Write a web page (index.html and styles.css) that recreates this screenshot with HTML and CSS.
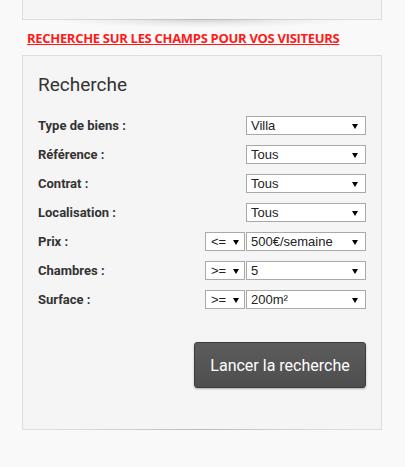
FILE: index.html
```html
<!DOCTYPE html>
<html lang="fr">
<head>
<meta charset="utf-8">
<title>Recherche</title>
<link rel="stylesheet" href="styles.css">
</head>
<body>
<div class="page">
  <div class="box box-top"></div>
  <a class="promo" href="#">RECHERCHE SUR LES CHAMPS POUR VOS VISITEURS</a>
  <form class="box search">
    <h2 class="title">Recherche</h2>
    <div class="row">
      <label class="lbl">Type de biens :</label>
      <div class="ctrls"><span class="sel"><select><option>Villa</option></select></span></div>
    </div>
    <div class="row">
      <label class="lbl">Référence :</label>
      <div class="ctrls"><span class="sel"><select><option>Tous</option></select></span></div>
    </div>
    <div class="row">
      <label class="lbl">Contrat :</label>
      <div class="ctrls"><span class="sel"><select><option>Tous</option></select></span></div>
    </div>
    <div class="row">
      <label class="lbl">Localisation :</label>
      <div class="ctrls"><span class="sel"><select><option>Tous</option></select></span></div>
    </div>
    <div class="row">
      <label class="lbl">Prix :</label>
      <div class="ctrls"><span class="sel sel-op"><select><option>&lt;=</option></select></span><span class="sel"><select><option>500€/semaine</option></select></span></div>
    </div>
    <div class="row">
      <label class="lbl">Chambres :</label>
      <div class="ctrls"><span class="sel sel-op"><select><option>&gt;=</option></select></span><span class="sel"><select><option>5</option></select></span></div>
    </div>
    <div class="row">
      <label class="lbl">Surface :</label>
      <div class="ctrls"><span class="sel sel-op"><select><option>&gt;=</option></select></span><span class="sel"><select><option>200m²</option></select></span></div>
    </div>
    <div class="actions">
      <button type="button" class="btn">Lancer la recherche</button>
    </div>
  </form>
</div>
</body>
</html>
```

FILE: styles.css
```css
html, body {
  margin: 0;
  padding: 0;
  background: #f9f9f9;
}

.page {
  width: 360px;
  margin-left: 22px;
}

.box {
  position: relative;
  box-sizing: border-box;
  background: #f5f5f5;
  border: 1px solid #dddddd;
}

.box::after {
  content: "";
  position: absolute;
  left: 8%;
  right: 8%;
  top: 100%;
  height: 9px;
  background: radial-gradient(ellipse 50% 100% at 50% 0%, rgba(0,0,0,0.16), rgba(0,0,0,0.05) 55%, rgba(0,0,0,0) 100%);
  pointer-events: none;
}

.box-top {
  height: 20px;
  border-top: none;
}

.promo {
  display: inline-block;
  margin: 9px 0 0 5px;
  font-family: "Open Sans", sans-serif;
  font-weight: 700;
  font-size: 13px;
  line-height: 18px;
  color: #ff1a1a;
  text-decoration: underline;
  text-underline-offset: 1px;
  letter-spacing: -0.3px;
}

.search {
  margin-top: 8px;
  padding: 17px 15px 41px 15px;
  font-family: Roboto, "Liberation Sans", sans-serif;
}

.title {
  margin: 0 0 18px 0;
  font-family: Roboto, sans-serif;
  font-weight: 400;
  font-size: 19px;
  line-height: 24px;
  color: #333333;
}

.row {
  display: flex;
  align-items: center;
  height: 19px;
  margin-bottom: 10px;
}

.lbl {
  flex: 1;
  font-family: Roboto, sans-serif;
  font-weight: 700;
  font-size: 13px;
  color: #333333;
  padding-top: 2px;
}

.ctrls {
  display: flex;
  gap: 1px;
}

.sel {
  position: relative;
  display: block;
  width: 120px;
  height: 19px;
}

.sel-op {
  width: 40px;
}

.sel select {
  -webkit-appearance: none;
  appearance: none;
  box-sizing: border-box;
  width: 100%;
  height: 19px;
  margin: 0;
  padding: 0 0 0 4px;
  border: 1px solid #a9a9a9;
  border-radius: 0;
  background: #ffffff;
  font-family: "Liberation Sans", Arial, sans-serif;
  font-size: 13px;
  line-height: 17px;
  color: #222222;
  outline: none;
}

.sel-op select {
  padding-left: 5px;
}

.sel::after {
  content: "";
  position: absolute;
  right: 8px;
  top: 9px;
  width: 0;
  height: 0;
  border-left: 3px solid transparent;
  border-right: 3px solid transparent;
  border-top: 5px solid #000000;
  pointer-events: none;
}

.sel-op::after {
  right: 6px;
}

.actions {
  display: flex;
  justify-content: flex-end;
  margin-top: 34px;
}

.btn {
  width: 172px;
  height: 46px;
  border: 1px solid #3c3c3c;
  border-radius: 3px;
  background: linear-gradient(#5c5c5c, #4e4e4e);
  box-shadow: 0 1px 2px rgba(0,0,0,0.3);
  color: #ffffff;
  font-family: Roboto, sans-serif;
  font-size: 16px;
  font-weight: 400;
  cursor: pointer;
}
```
